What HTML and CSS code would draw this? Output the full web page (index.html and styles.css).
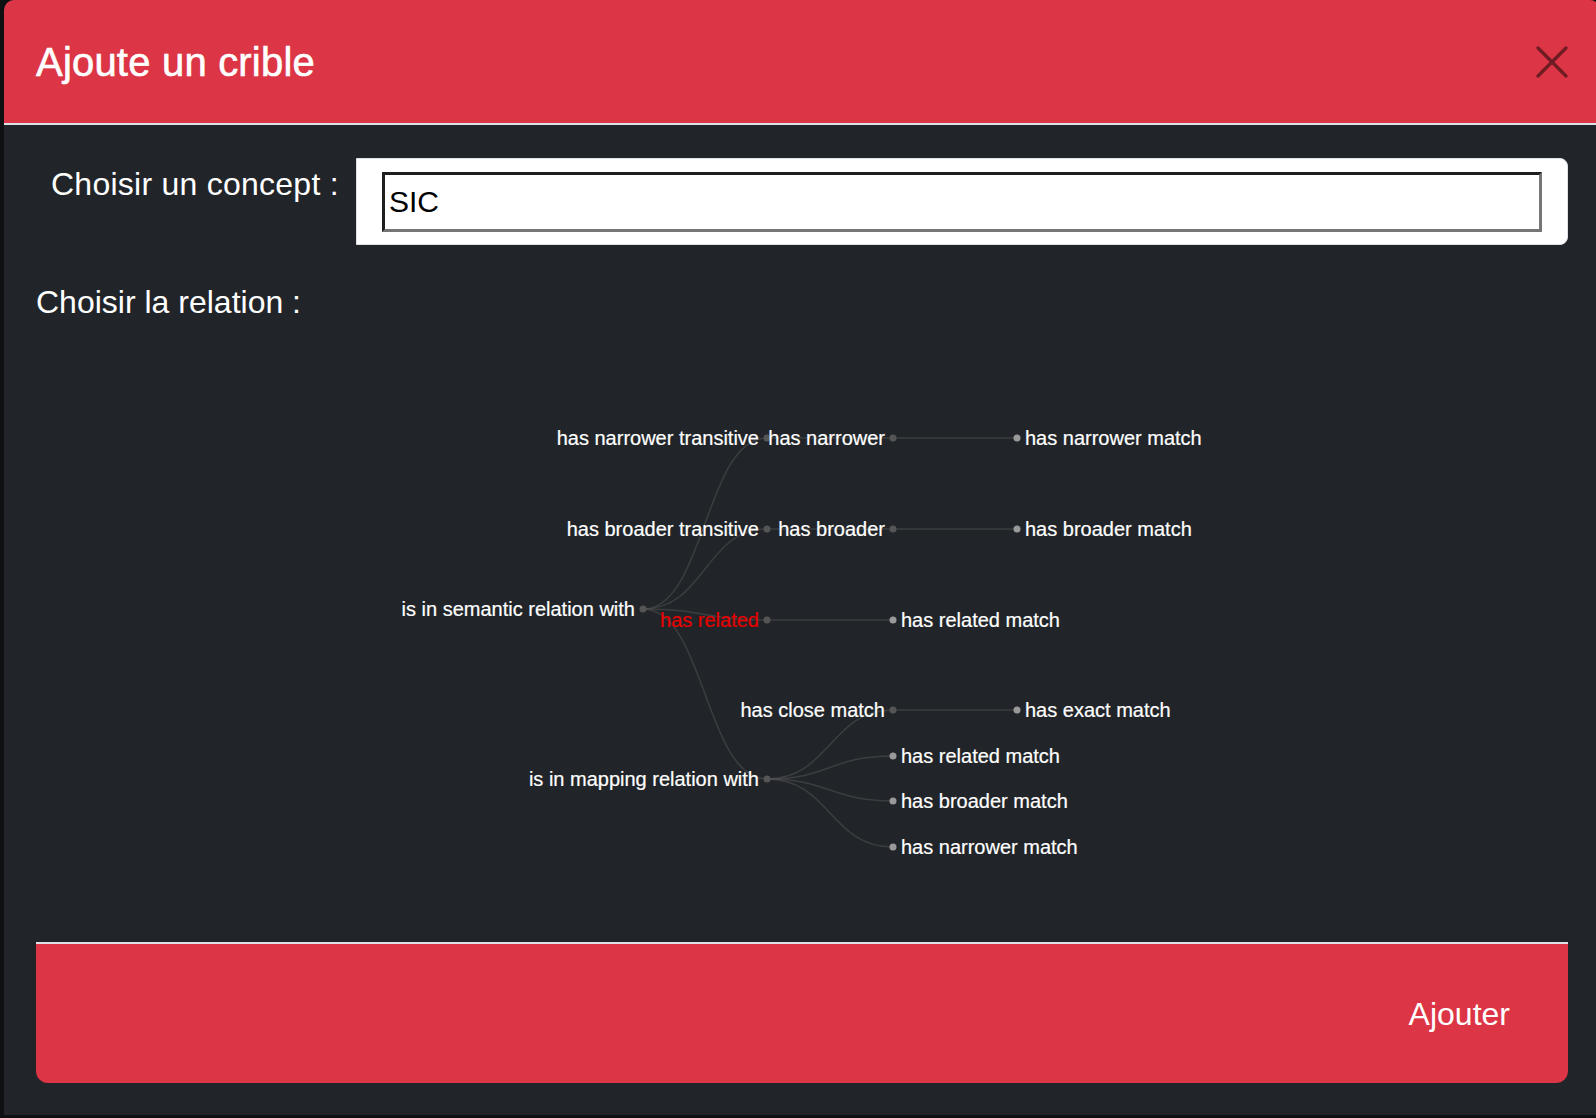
FILE: index.html
```html
<!DOCTYPE html>
<html lang="fr">
<head>
    <meta charset="UTF-8">
    <meta name="viewport" content="width=device-width, initial-scale=1.0">
    <title>Ajoute un crible</title>
    <link rel="stylesheet" href="styles.css">
</head>
<body>
    <div class="modal">
        <!-- en-tête -->
        <div class="modal-header">
            <h1 class="modal-title">Ajoute un crible</h1>
            <button class="btn-close" aria-label="Fermer">
                <svg width="32" height="32" viewBox="0 0 32 32">
                    <path d="M2 2L30 30M30 2L2 30" stroke="#6e1b23" stroke-width="3.2" stroke-linecap="round" fill="none"/>
                </svg>
            </button>
        </div>

        <!-- corps -->
        <div class="modal-body">
            <div class="concept-row">
                <label class="concept-label" for="concept">Choisir un concept :</label>
                <div class="concept-box">
                    <input type="text" id="concept" value="SIC">
                </div>
            </div>

            <h2 class="relation-title">Choisir la relation :</h2>

            <svg class="tree" width="1532" height="621" viewBox="36 321 1532 621">
                <g class="links">
                    <path d="M643,609C705,609 705,438 767,438"/>
                    <path d="M643,609C705,609 705,529 767,529"/>
                    <path d="M643,609C705,609 705,620 767,620"/>
                    <path d="M643,609C705,609 705,779 767,779"/>
                    <path d="M767,438H893"/>
                    <path d="M767,529H893"/>
                    <path d="M767,620H893"/>
                    <path d="M767,779C830,779 830,710 893,710"/>
                    <path d="M767,779C830,779 830,756 893,756"/>
                    <path d="M767,779C830,779 830,801 893,801"/>
                    <path d="M767,779C830,779 830,847 893,847"/>
                    <path d="M893,438H1017"/>
                    <path d="M893,529H1017"/>
                    <path d="M893,710H1017"/>
                </g>
                <g class="nodes">
                    <circle class="parent" cx="643" cy="609" r="3.5"/>
                    <circle class="parent" cx="767" cy="438" r="3.5"/>
                    <circle class="parent" cx="767" cy="529" r="3.5"/>
                    <circle class="parent" cx="767" cy="620" r="3.5"/>
                    <circle class="parent" cx="767" cy="779" r="3.5"/>
                    <circle class="parent" cx="893" cy="438" r="3.5"/>
                    <circle class="parent" cx="893" cy="529" r="3.5"/>
                    <circle class="leaf" cx="893" cy="620" r="3.5"/>
                    <circle class="parent" cx="893" cy="710" r="3.5"/>
                    <circle class="leaf" cx="893" cy="756" r="3.5"/>
                    <circle class="leaf" cx="893" cy="801" r="3.5"/>
                    <circle class="leaf" cx="893" cy="847" r="3.5"/>
                    <circle class="leaf" cx="1017" cy="438" r="3.5"/>
                    <circle class="leaf" cx="1017" cy="529" r="3.5"/>
                    <circle class="leaf" cx="1017" cy="710" r="3.5"/>
                </g>
                <g class="labels">
                    <text class="end" x="635" y="609" dy="0.35em">is in semantic relation with</text>
                    <text class="end" x="759" y="438" dy="0.35em">has narrower transitive</text>
                    <text class="end" x="759" y="529" dy="0.35em">has broader transitive</text>
                    <text class="end selected" x="759" y="620" dy="0.35em">has related</text>
                    <text class="end" x="759" y="779" dy="0.35em">is in mapping relation with</text>
                    <text class="end" x="885" y="438" dy="0.35em">has narrower</text>
                    <text class="end" x="885" y="529" dy="0.35em">has broader</text>
                    <text x="901" y="620" dy="0.35em">has related match</text>
                    <text class="end" x="885" y="710" dy="0.35em">has close match</text>
                    <text x="901" y="756" dy="0.35em">has related match</text>
                    <text x="901" y="801" dy="0.35em">has broader match</text>
                    <text x="901" y="847" dy="0.35em">has narrower match</text>
                    <text x="1025" y="438" dy="0.35em">has narrower match</text>
                    <text x="1025" y="529" dy="0.35em">has broader match</text>
                    <text x="1025" y="710" dy="0.35em">has exact match</text>
                </g>
            </svg>

            <!-- pied -->
            <div class="modal-footer">
                <button class="btn-add">Ajouter</button>
            </div>
        </div>
    </div>
</body>
</html>
```
FILE: styles.css
```css
* {
    margin: 0;
    padding: 0;
    box-sizing: border-box;
    font-family: "Liberation Sans", Arial, sans-serif;
}

body {
    background: #0e1012;
    overflow: hidden;
    width: 1596px;
    height: 1118px;
}

.modal {
    margin-left: 4px;
    width: 1596px;
    background: #212529;
    border-radius: 10px 10px 0 0;
    overflow: hidden;
}

.modal-header {
    height: 125px;
    padding: 0 32px;
    display: flex;
    align-items: center;
    justify-content: space-between;
    background: #dc3545;
    border-bottom: 2px solid #dee2e6;
}

.modal-title {
    color: #fff;
    font-size: 40px;
    font-weight: 400;
    line-height: 48px;
    letter-spacing: 0.2px;
    -webkit-text-stroke: 0.6px #fff;
    margin-top: 1px;
}

.btn-close {
    width: 32px;
    height: 32px;
    background: transparent;
    border: none;
    cursor: pointer;
    display: flex;
}

.modal-body {
    padding: 33px 32px 32px;
}

.concept-row {
    display: flex;
    align-items: flex-start;
}

.concept-label {
    flex: 0 0 320px;
    padding: 7px 0 0 15px;
    color: #fff;
    font-size: 32px;
    line-height: 38px;
    letter-spacing: 0.25px;
}

.concept-box {
    flex: 1;
    background: #fff;
    border: 1px solid #dee2e6;
    border-radius: 0 8px 8px 0;
    padding: 13px 25px 12px;
}

.concept-box input {
    display: block;
    width: 100%;
    height: 60px;
    padding: 0 4px;
    font-size: 30px;
    color: #000;
    background: #fff;
    outline: none;
    border-style: solid;
    border-width: 3px;
    border-color: #1e1e1e #767676 #767676 #1e1e1e;
}

.relation-title {
    margin-top: 38px;
    color: #fff;
    font-size: 32px;
    font-weight: 400;
    line-height: 38px;
}

.tree {
    display: block;
}

.tree .links path {
    fill: none;
    stroke: #555;
    stroke-opacity: 0.5;
    stroke-width: 1.5px;
}

.tree .parent {
    fill: #555;
}

.tree .leaf {
    fill: #999;
}

.tree text {
    fill: #fff;
    font-size: 20px;
    stroke: #fff;
    stroke-width: 0.2px;
}

.tree text.end {
    text-anchor: end;
}

.tree text.selected {
    fill: #e50000;
    stroke: #e50000;
}

.modal-footer {
    height: 141px;
    display: flex;
    align-items: center;
    justify-content: flex-end;
    padding-right: 58px;
    background: #dc3545;
    border-top: 2px solid #dee2e6;
    border-radius: 0 0 12px 12px;
}

.btn-add {
    background: transparent;
    border: none;
    color: #fff;
    font-size: 32px;
    line-height: 38px;
    cursor: pointer;
}
```
